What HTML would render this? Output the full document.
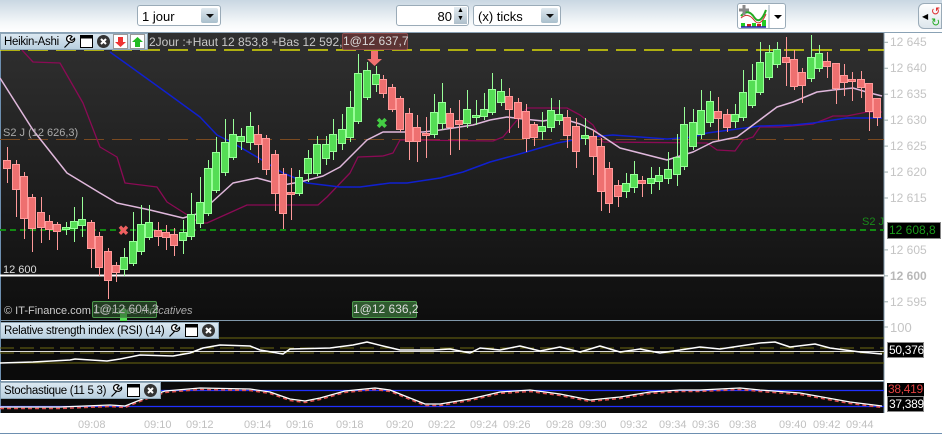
<!DOCTYPE html>
<html><head><meta charset="utf-8"><style>
*{margin:0;padding:0;box-sizing:border-box}
body{width:942px;height:436px;overflow:hidden;background:#fff;font-family:"Liberation Sans",sans-serif;position:relative}
.abs{position:absolute;white-space:nowrap}
.top{left:0;top:0;width:942px;height:33px;background:linear-gradient(#c9d7e2,#f4f7f9 70%,#fff);border-bottom:1px solid #8aa2b5}
.dd{background:#fff;border:1px solid #9aabb8;border-radius:3px;font-size:13px;color:#000;padding:3px 4px}
.arr{position:absolute;right:2px;top:2px;width:17px;height:15px;background:linear-gradient(#dfe8ee,#a9bfcc);border-radius:2px}
.arr:after{content:"";position:absolute;left:5px;top:6px;border:4px solid transparent;border-top:4px solid #111;border-bottom:0}
.hdr{background:linear-gradient(#dbe8f1,#b9cfdf);border:1px solid #8ea6b8;font-size:11.5px;color:#000;height:17px;padding:0 2px 0 3px;display:flex;align-items:center;gap:2px}
.hdr svg{flex-shrink:0}
.hdr span{margin-right:1px;letter-spacing:-.3px}
.ax{font-size:12px;color:#c4c4c4}
.tm{font-size:11px;color:#c0c0c0}
.lbl{font-size:12px;text-align:center;line-height:15px;height:17px;border-radius:2px}
</style></head><body>
<div class="abs top">
 <div class="abs dd" style="left:137px;top:5px;width:84px;height:21px">1 jour<span class="arr"></span></div>
 <div class="abs dd" style="left:396px;top:5px;width:73px;height:21px;text-align:right;padding-right:16px">80<span style="position:absolute;right:1px;top:1px;width:13px;height:17px;background:linear-gradient(#e4ecf1,#aebfcb);font-size:7px;line-height:8px;text-align:center">▲<br>▼</span></div>
 <div class="abs dd" style="left:473px;top:5px;width:88px;height:21px">(x) ticks<span class="arr"></span></div>
 <div class="abs" style="left:737px;top:3px;width:49px;height:26px;background:#fff;border:1px solid #9aabb8;border-radius:3px">
  <svg width="49" height="26"><rect x="3" y="19" width="4" height="4" fill="#2c2"/><rect x="9" y="20" width="4" height="3" fill="#c22"/><rect x="14" y="19" width="4" height="4" fill="#2c2"/><rect x="19" y="20" width="4" height="3" fill="#c22"/><rect x="24" y="16" width="4" height="7" fill="#2c2"/><path d="M3 23H28" stroke="#22a" stroke-width="1.5"/><path d="M3 12Q10 4 16 13T28 6" stroke="#2a2" fill="none" stroke-width="2"/><path d="M3 14Q10 8 16 16T28 10" stroke="#c33" fill="none"/><path d="M1 6h10M6 1v10" stroke="#888" stroke-width="3"/><path d="M31 1v24" stroke="#9aabb8"/><path d="M36 11l4 4 4-4z" fill="#000"/></svg>
 </div>
 <div class="abs" style="left:918px;top:3px;width:24px;height:26px;background:linear-gradient(#fff,#dde6ec);border:1px solid #9aabb8;border-radius:6px 0 0 6px"><span style="position:absolute;left:3px;top:8px;color:#000;font-size:8px">◀</span><span style="position:absolute;left:12px;top:1px;color:#d22;font-size:11px">↺</span><span style="position:absolute;left:12px;top:12px;color:#2a2;font-size:11px">↻</span></div>
</div>

<svg class="abs" style="left:0;top:33px" width="942" height="380" id="sv">
 <defs><linearGradient id="g" x1="0" y1="0" x2="0" y2="1"><stop offset="0" stop-color="#303030"/><stop offset="1" stop-color="#0e0e0e"/></linearGradient></defs>
 <rect x="0" y="0" width="884" height="287" fill="url(#g)"/>
 <rect x="884" y="0" width="58" height="380" fill="#fff"/>
 <rect x="0" y="288" width="884" height="59" fill="#0b0b0b"/>
 <rect x="0" y="349" width="884" height="31" fill="#0b0b0b"/>
 <path d="M884 0V380" stroke="#7f97a9"/>
 <path d="M0 287.5H884M0 348.5H884" stroke="#7f97a9"/>
 <path d="M0.5 0V380" stroke="#6d8fb0"/>
</svg>

<svg width="0" height="0" style="position:absolute"><defs>
<g id="wr"><path d="M2.5 13.5L8 8M8 8a3.2 3.2 0 1 1 2-5.5l-2 2.3 1 1.4 1.4 0 2.1-1.9a3.2 3.2 0 0 1-4.5 3.7" stroke="#000" stroke-width="1.2" fill="#fff"/></g>
<g id="wn"><rect x="1.5" y="1.5" width="12" height="12" fill="#fff" stroke="#000"/><rect x="1.5" y="1.5" width="12" height="3" fill="#000"/></g>
<g id="cl"><circle cx="7.5" cy="7.5" r="6.5" fill="#333"/><path d="M5 5l5 5M10 5l-5 5" stroke="#fff" stroke-width="2"/></g>
</defs></svg>

<div class="abs hdr" style="left:0;top:33px"><span>Heikin-Ashi</span>
 <svg width="15" height="15"><use href="#wr"/></svg><svg width="15" height="15"><use href="#wn"/></svg><svg width="15" height="15"><use href="#cl"/></svg>
 <svg width="15" height="15"><rect x=".5" y=".5" width="14" height="14" fill="#fff" stroke="#999"/><path d="M5 3h5v5h3l-5.5 5-5.5-5h3z" fill="#e33"/></svg>
 <svg width="15" height="15"><rect x=".5" y=".5" width="14" height="14" fill="#fff" stroke="#999"/><path d="M5 13h5v-5h3l-5.5-5-5.5 5h3z" fill="#2b2"/></svg>
</div>
<div class="abs" style="left:149px;top:35px;font-size:12px;color:#c8c8c8">2Jour :+Haut 12 853,8 +Bas 12 592,8</div>
<div class="abs lbl" style="left:342px;top:33px;width:66px;background:#5c3434;border:1px solid #8b4b4b;color:#d8d8d8">1@12 637,7</div>
<div class="abs" style="left:3px;top:127px;font-size:11px;color:#aaa">S2 J (12 626,3)</div>
<div class="abs" style="left:3px;top:264px;font-size:11px;color:#ddd">12 600</div>
<div class="abs" style="left:4px;top:305px;font-size:11px;color:#ccc">© IT-Finance.com <i style="color:#aaa">Données indicatives</i></div>
<div class="abs lbl" style="left:92px;top:301px;width:65px;background:rgba(47,90,47,.6);border:1px solid #4c9a4c;color:#bbb">1@12 604,2</div>
<div class="abs lbl" style="left:352px;top:301px;width:65px;background:#2f5a2f;border:1px solid #4c9a4c;color:#ddd">1@12 636,2</div>
<div class="abs" style="left:862px;top:216px;font-size:11px;color:#1a8a1a">S2 J</div>
<div class="abs" style="left:887px;top:222px;width:54px;height:17px;background:#000;border:1px solid #888;color:#1a9a1a;font-size:12px;line-height:15px;padding-left:1px">12 608,8</div>

<div class="abs hdr" style="left:0;top:322px"><span>Relative strength index (RSI) (14)</span>
 <svg width="15" height="15"><use href="#wr"/></svg><svg width="15" height="15"><use href="#wn"/></svg><svg width="15" height="15"><use href="#cl"/></svg></div>
<div class="abs" style="left:890px;top:320px;font-size:13px;color:#c4c4c4">100</div>
<div class="abs" style="left:887px;top:342px;width:37px;height:16px;background:#000;border:1px solid #888;color:#fff;font-size:12px;line-height:14px;padding-left:1px;letter-spacing:-.3px">50,376</div>
<div class="abs hdr" style="left:0;top:382px"><span>Stochastique (11 5 3)</span>
 <svg width="15" height="15"><use href="#wr"/></svg><svg width="15" height="15"><use href="#wn"/></svg><svg width="15" height="15"><use href="#cl"/></svg></div>
<div class="abs" style="left:887px;top:383px;width:37px;height:13px;background:#000;color:#e04040;font-size:12px;line-height:13px;padding-left:1px;overflow:hidden;letter-spacing:-.3px">38,419</div>
<div class="abs" style="left:887px;top:396px;width:37px;height:16px;background:#000;border:1px solid #888;color:#fff;font-size:12px;line-height:14px;padding-left:1px;letter-spacing:-.3px">37,389</div>
<div id="ax"></div>
<div class="abs" style="left:0;top:433px;width:942px;height:3px;border-top:1px solid #6d8fb0;background:#fff"></div>

<script>
var NS="http://www.w3.org/2000/svg",sv=document.getElementById("sv");
function el(t,a){var e=document.createElementNS(NS,t);for(var k in a)e.setAttribute(k,a[k]);sv.appendChild(e);return e}
var O=33;
el("path",{d:"M0 17H884",stroke:"#ffff00","stroke-width":1.3,"stroke-dasharray":"20 8"});
el("path",{d:"M0 106.5H884",stroke:"#7a4a20","stroke-dasharray":"20 8"});
el("path",{d:"M0 197H884",stroke:"#138a13","stroke-width":2,"stroke-dasharray":"6 4"});
el("path",{d:"M0 242.5H884",stroke:"#fff","stroke-width":2});
function pl(pts,c,w,extra){var d=pts.map(function(p,i){return(i?"L":"M")+p[0]+" "+(p[1]-O)}).join("");var a={d:d,stroke:c,"stroke-width":w,fill:"none","stroke-linejoin":"round"};for(var k in extra)a[k]=extra[k];el("path",a)}
pl([[22,50],[33,62],[60,63],[83,103],[100,147],[117,157],[125,183],[157,187],[167,202],[200,223],[207,223],[247,205],[318,205],[327,197],[350,173],[358,157],[383,156],[393,153],[400,140],[407,140],[493,141],[503,137],[527,108],[567,108],[580,115],[593,125],[603,142],[707,143],[717,150],[735,151],[743,140],[753,137],[760,127],[780,127],[813,124],[833,116],[847,116],[867,112],[882,112]],"#8b0a55",1.3);
pl([[110,52],[167,93],[200,117],[217,135],[233,143],[257,157],[283,173],[300,180],[307,183],[340,187],[360,187],[390,183],[407,183],[440,178],[463,172],[490,162],[523,153],[557,143],[590,137],[613,135],[667,139],[693,137],[707,133],[760,126],[793,125],[813,123],[847,118],[882,118]],"#1020d0",1.5);
pl([[0,78],[33,130],[67,173],[100,193],[117,203],[150,210],[183,218],[200,213],[233,183],[257,178],[283,185],[300,182],[323,176],[340,167],[367,140],[383,132],[423,132],[440,130],[473,125],[490,120],[507,117],[523,119],[543,121],[560,118],[580,124],[593,130],[620,148],[667,160],[693,152],[713,142],[737,137],[757,122],[777,107],[793,102],[817,92],[833,90],[853,88],[870,93],[882,96]],"#e0b8dc",1.5);
var C=[[7,160,168,'r',147,183],[16,164,189,'r',160,217],[24,176,218,'r',172,239],[32,197,228,'r',194,252],[41,212,227,'r',197,243],[49,221,229,'r',215,240],[57,224,231,'r',222,250],[66,227,229,'g',222,235],[74,221,228,'g',207,242],[82,219,225,'g',197,237],[91,222,248,'r',220,268],[99,236,267,'r',232,276],[108,251,280,'r',248,299],[116,265,272,'r',262,282],[124,257,269,'g',248,276],[133,241,263,'g',212,266],[141,224,251,'g',205,255],[149,222,237,'g',205,240],[158,230,236,'r',222,246],[166,232,237,'r',225,250],[174,234,245,'r',228,256],[183,232,240,'g',220,254],[191,214,236,'g',193,240],[200,202,223,'g',177,228],[208,168,213,'g',160,216],[216,152,190,'g',137,193],[225,142,172,'g',119,176],[233,134,157,'g',119,160],[241,136,141,'g',128,150],[250,126,142,'g',112,150],[258,134,144,'r',125,163],[266,138,169,'r',135,175],[275,154,193,'r',150,211],[283,174,213,'r',168,229],[291,192,194,'r',168,220],[299,177,193,'g',170,196],[308,158,173,'g',150,182],[317,144,173,'g',136,176],[326,144,158,'g',136,165],[333,134,151,'g',119,160],[342,129,143,'g',114,150],[350,107,137,'g',91,142],[358,73,121,'g',54,124],[367,70,97,'g',62,100],[376,74,84,'g',66,92],[383,79,93,'r',75,98],[392,87,109,'r',84,112],[400,98,129,'r',96,132],[409,113,141,'r',108,160],[417,127,141,'r',115,162],[426,133,135,'r',117,158],[434,112,134,'g',94,138],[442,102,123,'g',83,130],[450,113,127,'r',108,155],[459,120,124,'r',100,150],[467,109,123,'g',90,128],[476,115,117,'g',100,125],[484,109,116,'g',93,120],[492,89,112,'g',73,115],[501,91,102,'g',79,106],[509,96,109,'r',88,133],[518,102,118,'r',98,128],[526,111,138,'r',104,152],[534,124,137,'r',122,146],[542,126,131,'g',112,140],[551,110,127,'g',98,132],[559,114,120,'g',100,125],[567,117,135,'r',110,148],[576,126,151,'r',118,168],[585,135,138,'g',118,145],[593,136,156,'r',130,175],[601,146,191,'r',138,211],[609,168,203,'r',162,213],[618,185,196,'r',180,207],[626,183,191,'g',173,198],[634,174,187,'g',161,193],[642,180,183,'r',176,197],[651,178,183,'g',167,194],[659,175,181,'g',167,190],[668,169,178,'g',152,184],[677,157,174,'g',134,186],[684,124,166,'g',107,170],[693,122,146,'g',109,150],[701,110,134,'g',90,139],[710,101,122,'g',91,127],[718,111,118,'r',97,140],[727,114,127,'r',109,132],[735,114,121,'g',104,128],[743,92,117,'g',70,121],[752,80,105,'g',64,108],[760,62,92,'g',42,95],[769,52,77,'g',45,80],[777,49,64,'g',42,68],[786,57,62,'r',37,86],[794,59,86,'r',50,90],[802,72,85,'r',68,103],[811,57,78,'g',35,82],[819,53,68,'g',45,72],[827,61,66,'r',52,78],[836,63,88,'r',63,104],[844,75,82,'r',64,96],[852,79,81,'r',72,101],[861,79,87,'r',71,98],[869,83,111,'r',83,131],[877,98,117,'r',98,126]];
C.forEach(function(c){var g=c[3]=='g',f=g?'#55dd55':'#ee7070',s=g?'#99ff99':'#ff9a9a';
el("path",{d:"M"+(c[0]+.5)+" "+(c[4]-O)+"V"+(c[5]-O),stroke:s});
el("rect",{x:c[0]-3.5,y:c[1]-O+.5,width:7,height:Math.max(1,c[2]-c[1]),fill:f,stroke:s});});
el("path",{d:"M371 18h7v8h4l-7.5 7-7.5-7h4z",fill:"#f07070"});
el("path",{d:"M120 288h7v-7h4l-7.5-7-7.5 7h4z",fill:"#55dd55"});
el("text",{x:376,y:95,fill:"#44cc44","font-size":14,"font-weight":"bold","font-family":"Liberation Sans"}).textContent="✖";
el("text",{x:118,y:202,fill:"#ee6060","font-size":13,"font-weight":"bold","font-family":"Liberation Sans"}).textContent="✖";
el("path",{d:"M0 305H884M0 330H884",stroke:"#6e6a10"});
el("path",{d:"M0 315H884M0 320H884",stroke:"#6e6a10","stroke-dasharray":"14 6"});
el("path",{d:"M0 318.5H884",stroke:"#ddd"});
var R=[[0,363],[33,362],[70,360],[75,359],[107,361],[120,359],[140,355],[173,356],[190,353],[203,348],[220,345],[250,346],[260,350],[283,354],[290,349],[330,348],[353,345],[367,342],[383,346],[400,350],[433,350],[450,349],[470,353],[480,348],[500,350],[520,346],[540,351],[560,347],[580,352],[600,346],[620,352],[640,349],[660,353],[680,350],[700,347],[720,349],[740,346],[760,343],[775,342],[790,347],[815,344],[830,348],[860,352],[882,354]];
pl(R,"#fff",1.5);
el("path",{d:"M0 357.5H884M0 373.5H884",stroke:"#2030ff","stroke-width":1.2});
var S=[[0,407],[60,407],[110,405],[125,406],[145,398],[165,391],[200,388],[250,389],[270,392],[290,399],[305,401],[320,398],[345,391],[375,388],[390,390],[405,396],[425,404],[440,404],[470,399],[500,392],[530,390],[560,394],[590,400],[620,397],[650,392],[680,390],[700,390],[740,388],[760,390],[800,393],[850,402],[882,406]];
pl(S.map(function(p){return[p[0],p[1]+1.5]}),"#e05050",1.5,{"stroke-dasharray":"4 3"});
pl(S,"#fff",1.3);
var g="";
[[12645,"12 645"],[12640,"12 640"],[12635,"12 635"],[12630,"12 630"],[12625,"12 625"],[12620,"12 620"],[12615,"12 615"],[12605,"12 605"],[12600,"12 600"],[12595,"12 595"]].forEach(function(a){var y=42.3+(12645-a[0])*5.19;
el("path",{d:"M884 "+(y-O)+"h4",stroke:"#9aa"});
g+='<div class="abs ax" style="left:890px;top:'+(y-7)+'px'+(a[0]==12600?';font-weight:bold;color:#b8b8b8':'')+'">'+a[1]+'</div>';});
el("path",{d:"M884 294h4M884 386h4",stroke:"#9aa"});
[[92,"09:08"],[158,"09:10"],[200,"09:12"],[258,"09:14"],[300,"09:16"],[350,"09:18"],[400,"09:20"],[442,"09:22"],[484,"09:24"],[517,"09:26"],[560,"09:28"],[593,"09:30"],[634,"09:32"],[673,"09:34"],[706,"09:36"],[743,"09:38"],[793,"09:40"],[827,"09:42"],[860,"09:44"]].forEach(function(t){
el("path",{d:"M"+(t[0]+.5)+" 381v4",stroke:"#999"});
g+='<div class="abs tm" style="left:'+(t[0]-14)+'px;top:419px">'+t[1]+'</div>';});
document.getElementById("ax").innerHTML=g;
</script>
</body></html>
